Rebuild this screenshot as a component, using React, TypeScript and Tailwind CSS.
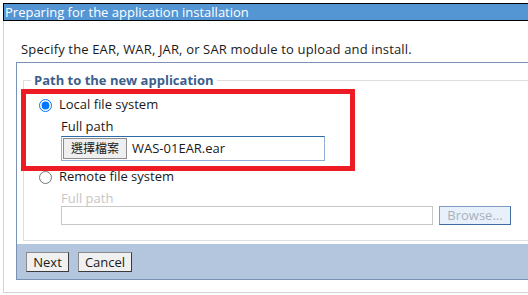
const font = "font-['Open_Sans','Noto_Sans_CJK_TC',sans-serif]";

export default function App() {
  return (
    <div className={`relative w-[528px] h-[295px] overflow-hidden bg-white text-[13px] text-[#1a1a1a] ${font}`}>
      <div className="w-[620px]">
        {/* title bar */}
        <div className="ml-[3px] mt-[3px] h-[18px] border border-black bg-[#5495d4] pl-[1px] text-white leading-[16px] whitespace-nowrap">
          Preparing for the application installation
        </div>

        <div className="ml-[3px] h-[272px] border-l border-b border-[#d4d4d4] pl-[12px]">
          <p className="pt-[20px] pl-[5px] leading-[16px] tracking-[0.15px] whitespace-nowrap">
            Specify the EAR, WAR, JAR, or SAR module to upload and install.
          </p>

          <div className="mt-[5px] h-[218px] border border-[#7a92b4]">
            <fieldset className="ml-[6px] mt-[9px] h-[169px] border border-[#dedede] pl-[7px]">
              <legend className="px-[3px] font-bold leading-[16px] text-[#3c5f8c]">
                Path to the new application
              </legend>

              <label className="mt-[9px] ml-[8px] flex h-[16px] items-center gap-[7px]">
                <input type="radio" name="src" defaultChecked className="h-[13px] w-[13px]" />
                <span>Local file system</span>
              </label>
              <div className="ml-[30px] mt-[5px] leading-[16px]">Full path</div>
              <div className="ml-[30px] mt-[2px] flex h-[25px] w-[264px] items-center border border-[#8fb0d4] border-t-[#2c6ba3] pl-[1px]">
                <span className="flex h-[21px] w-[64px] items-center justify-center border border-[#8d8d8d] bg-[#efefef] text-[12px]">
                  選擇檔案
                </span>
                <span className="ml-[5px]">WAS-01EAR.ear</span>
              </div>

              <label className="mt-[8px] ml-[8px] flex h-[16px] items-center gap-[7px]">
                <input type="radio" name="src" className="h-[13px] w-[13px]" />
                <span>Remote file system</span>
              </label>
              <div className="ml-[30px] mt-[5px] leading-[16px] text-[#c6c6c6]">Full path</div>
              <div className="ml-[30px] mt-0 flex items-center gap-[6px]">
                <div className="h-[19px] w-[372px] border border-[#c8c8c8]" />
                <div className="flex h-[19px] w-[72px] items-center justify-center border border-[#7f9cc3] border-b-[#3f6c9c] border-r-[#3f6c9c] bg-[#e8f0fb] text-[#a9b0bd]">
                  Browse...
                </div>
              </div>
            </fieldset>

            <div className="mt-[3px] flex h-[35px] items-center gap-[9px] bg-[#b4c5de] pl-[9px]">
              <button className="h-[20px] w-[43px] border border-[#8a8a8a] border-b-[#3a3a3a] border-r-[#3a3a3a] bg-[#f0f0f0] leading-[16px]">
                Next
              </button>
              <button className="h-[20px] w-[54px] border border-[#8a8a8a] border-b-[#3a3a3a] border-r-[#3a3a3a] bg-[#f0f0f0] leading-[16px]">
                Cancel
              </button>
            </div>
          </div>
        </div>
      </div>

      {/* red annotation box */}
      <div className="absolute left-[21px] top-[89px] h-[82px] w-[334px] border-[5px] border-[#ed1c24]" />
    </div>
  );
}
